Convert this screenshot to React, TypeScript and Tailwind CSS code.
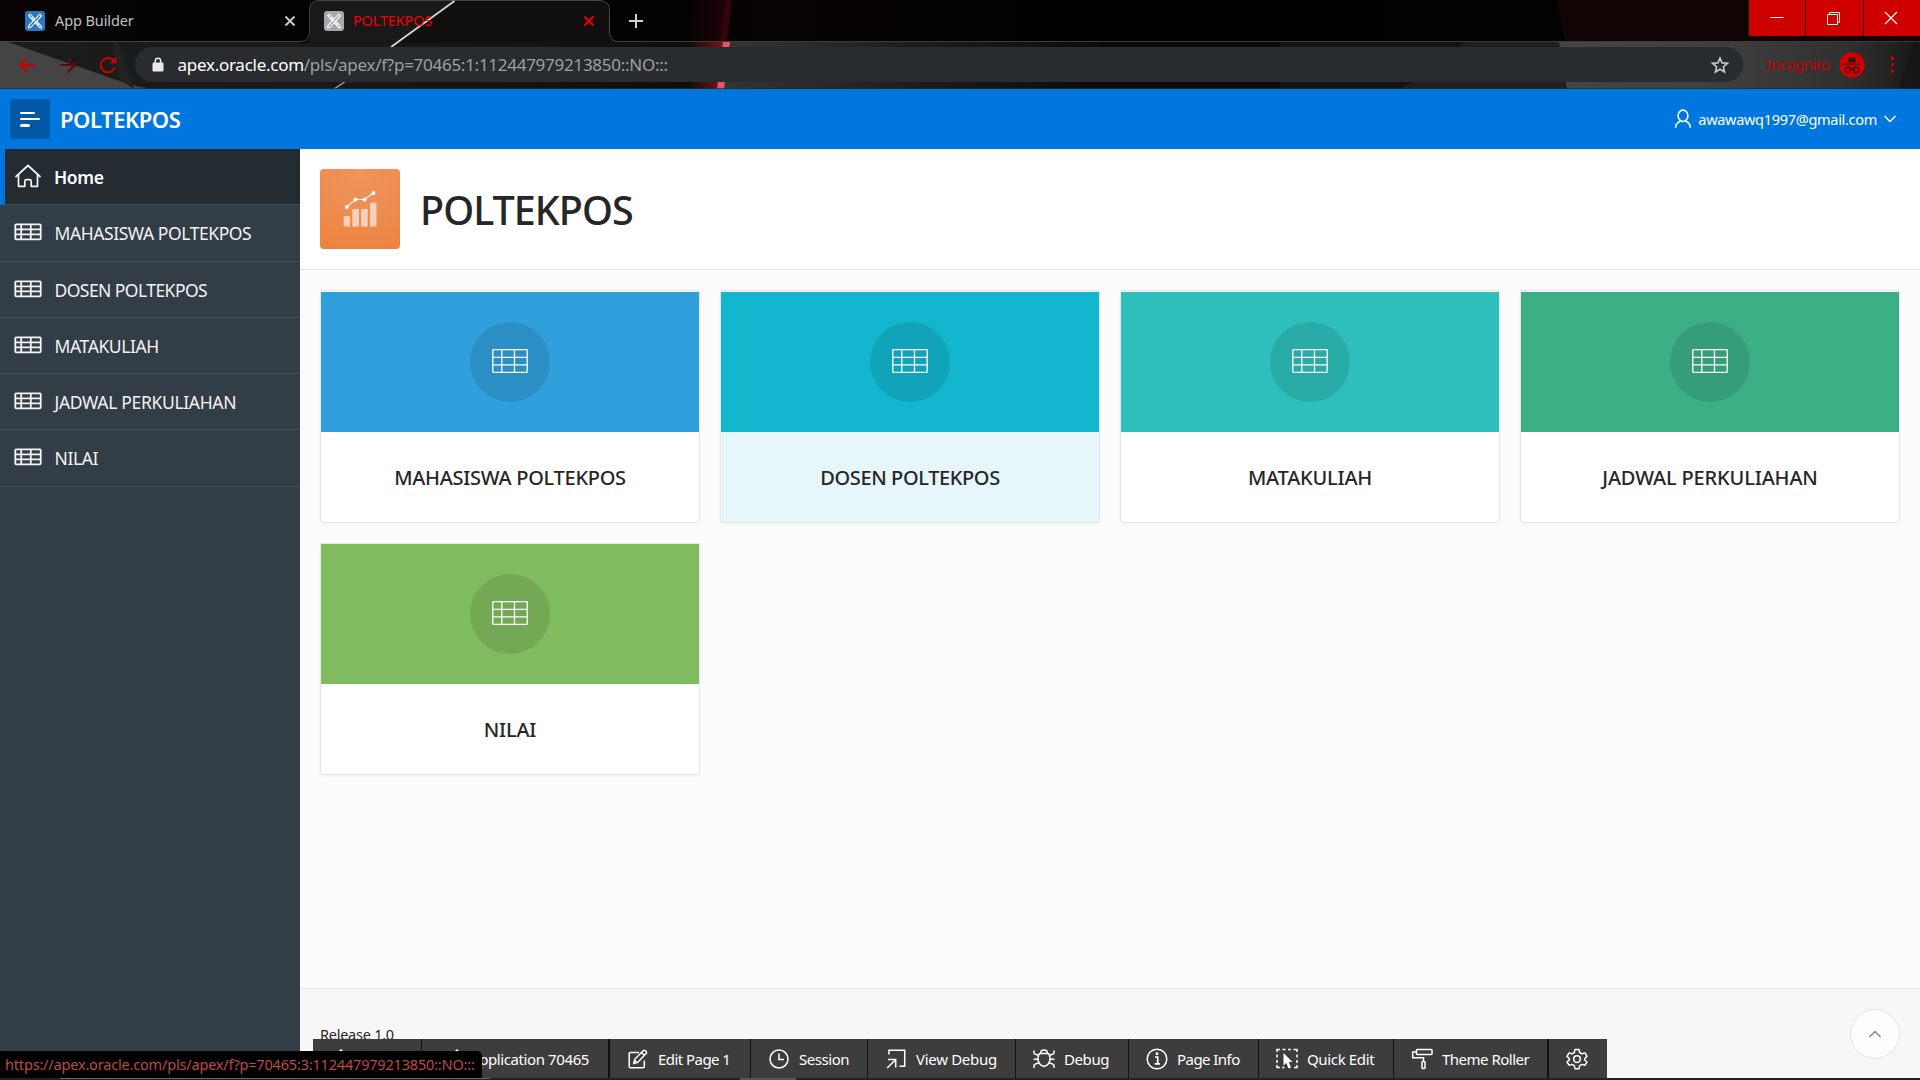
import React from 'react';

type IconProps = { className?: string };

/* ---------- Browser theme artwork ---------- */

function ThemeArt() {
  return (
    <svg className="absolute inset-0 h-[89px] w-[1920px]" viewBox="0 0 1920 89" fill="none">
      <defs>
        <linearGradient id="stripTop" x1="0" x2="1">
          <stop offset="0" stopColor="#0a0303" />
          <stop offset="0.1" stopColor="#020202" />
          <stop offset="0.35" stopColor="#030202" />
          <stop offset="0.4" stopColor="#070203" />
          <stop offset="0.55" stopColor="#020101" />
          <stop offset="0.8" stopColor="#030101" />
        </linearGradient>
        <linearGradient id="barMid" x1="0" x2="1">
          <stop offset="0" stopColor="#353535" />
          <stop offset="0.5" stopColor="#1d1d1d" />
          <stop offset="1" stopColor="#0b0b0b" />
        </linearGradient>
        <linearGradient id="barRight" x1="0" x2="1">
          <stop offset="0" stopColor="#454545" />
          <stop offset="0.4" stopColor="#404040" />
          <stop offset="0.8" stopColor="#303030" />
          <stop offset="1" stopColor="#181818" />
        </linearGradient>
        <linearGradient id="glow" x1="0" x2="1">
          <stop offset="0" stopColor="#7a1216" stopOpacity="0" />
          <stop offset="1" stopColor="#7a1216" />
        </linearGradient>
        <linearGradient id="barLeft" x1="0" x2="1">
          <stop offset="0" stopColor="#1c1c1c" />
          <stop offset="0.45" stopColor="#191919" />
          <stop offset="0.65" stopColor="#161514" />
          <stop offset="1" stopColor="#0f0d0c" />
        </linearGradient>
        <linearGradient id="topGlow" x1="0" x2="1">
          <stop offset="0" stopColor="#1c0306" stopOpacity="0" />
          <stop offset="1" stopColor="#1c0306" />
        </linearGradient>
      </defs>
      <rect width="1920" height="41" fill="url(#stripTop)" />
      <path d="M1557 0H1920V41H1565Z" fill="#110405" />
      <path d="M690 0H727L720 41H685Z" fill="url(#topGlow)" />
      <path d="M725 0H732L727 41H720Z" fill="#33030f" />
      <rect y="42" width="722" height="47" fill="url(#barLeft)" />
      <rect x="722" y="42" width="380" height="47" fill="url(#barMid)" />
      <rect x="1100" y="42" width="470" height="47" fill="#0a0a0a" />
      <path d="M1280 42H1465L1400 89H1280Z" fill="#131313" />
      <path d="M1465 42H1560L1567 89H1400Z" fill="#1f1f1f" />
      <path d="M1559 42H1920V89H1567Z" fill="url(#barRight)" />
      <path d="M1914 42H1920V89H1898Z" fill="#161616" opacity="0.7" />
      <path d="M0 42H8L128 84L150 89H0Z" fill="#444444" />
      <path d="M112 42H118L134 89L120 80Z" fill="#222222" />
      <rect x="690" y="42" width="32" height="47" fill="url(#glow)" />
      <path d="M723 42H730L724 89H717Z" fill="#f2506a" />
      <path d="M0 41.5H299" stroke="#454545" />
      <path d="M619 41.5H1920" stroke="#3c3c3c" />
      <path
        d="M299 41.5C306 41.5 309.5 38 309.5 31V10C309.5 4 313 0.5 319 0.5H599C605 0.5 609.5 4 609.5 10V31C609.5 38 612 41.5 619 41.5V43H299Z"
        fill="#11100f"
      />
      <path d="M310 10C310 4 313 1 319 1H455L392 47H310Z" fill="#191919" />
      <path
        d="M299 41.5C306 41.5 309.5 38 309.5 31V10C309.5 4 313 0.5 319 0.5H599C605 0.5 609.5 4 609.5 10V31C609.5 38 612 41.5 619 41.5"
        stroke="#454545"
      />
      <path d="M454.500 1L391 47" stroke="#d8d8d8" strokeWidth="1.700" />
      <path d="M346 81L334 89" stroke="#9a9a9a" strokeWidth="1.500" />
      <path d="M0 88.500H1920" stroke="#2a2a2a" opacity="0.7" />
    </svg>
  );
}

/* ---------- Icons ---------- */

function ApexLogo({ className }: IconProps) {
  return (
    <svg className={className} viewBox="0 0 20 20" fill="none" stroke="#fff" strokeWidth="1.1" strokeLinejoin="round">
      <path d="M3.600 4.600L5.200 3.200L16.400 15.400L16.600 17L15 16.800Z" />
      <path d="M14.800 3.200L16.600 4.800L6.200 16L3.400 16.900L4.200 14.200Z" fill="currentColor" />
      <path d="M6.500 6.500L14 14.500" opacity="0.700" />
    </svg>
  );
}

function Cross({ className }: IconProps) {
  return (
    <svg className={className} viewBox="0 0 12 12" fill="none" stroke="currentColor" strokeWidth="2">
      <path d="M1.500 1.500L10.500 10.500M10.500 1.500L1.500 10.500" />
    </svg>
  );
}

function ArrowIcon({ className }: IconProps) {
  return (
    <svg className={className} viewBox="0 0 18 18" fill="none" stroke="currentColor" strokeWidth="2">
      <path d="M17 9H2M9.500 1.500L2 9L9.500 16.500" />
    </svg>
  );
}

function ReloadIcon({ className }: IconProps) {
  return (
    <svg className={className} viewBox="0 0 18 18" fill="none">
      <path d="M14.800 4.800A7.200 7.200 0 1 0 16 11" stroke="currentColor" strokeWidth="2" />
      <path d="M17.300 0.500V7.500H10.300Z" fill="currentColor" />
    </svg>
  );
}

function LockIcon({ className }: IconProps) {
  return (
    <svg className={className} viewBox="0 0 12 15">
      <path d="M3.300 6V4A2.700 2.700 0 0 1 8.700 4V6" fill="none" stroke="#e8eaed" strokeWidth="1.500" />
      <rect x="0.500" y="5.500" width="11" height="9" rx="1.200" fill="#e8eaed" />
    </svg>
  );
}

function StarIcon({ className }: IconProps) {
  return (
    <svg className={className} viewBox="0 0 18 18" fill="none" stroke="#c4c7ca" strokeWidth="1.600">
      <path d="M9 2L11.100 6.900L16.400 7.300L12.400 10.800L13.600 16L9 13.200L4.400 16L5.600 10.800L1.600 7.300L6.900 6.900Z" />
    </svg>
  );
}

function IncognitoIcon({ className }: IconProps) {
  return (
    <svg className={className} viewBox="0 0 26 26">
      <circle cx="13" cy="13" r="12.700" fill="#d00000" />
      <g fill="#3a1010">
        <path d="M9 10.300L10 5.600Q11.500 5 13 5.900Q14.500 5 16 5.600L17 10.300Z" />
        <rect x="4.500" y="11.400" width="17" height="1.400" rx="0.600" />
      </g>
      <g fill="none" stroke="#3a1010" strokeWidth="1.300">
        <circle cx="9" cy="17.800" r="2.700" />
        <circle cx="17" cy="17.800" r="2.700" />
        <path d="M11.700 17.400Q13 16.600 14.300 17.400" />
      </g>
    </svg>
  );
}

function UserIcon({ className }: IconProps) {
  return (
    <svg className={className} viewBox="0 0 18 20" fill="none" stroke="currentColor" strokeWidth="1.600">
      <ellipse cx="9" cy="6.800" rx="4.900" ry="5.700" />
      <path d="M1.600 18.800C1.600 15.500 3.300 13.600 6.300 12.300M16.400 18.800C16.400 15.500 14.700 13.600 11.700 12.300" />
    </svg>
  );
}

function HomeIcon({ className }: IconProps) {
  return (
    <svg className={className} viewBox="0 0 28 24" fill="none" stroke="currentColor" strokeWidth="1.700" strokeLinejoin="round">
      <path d="M1.500 13L14 1.500L26.500 13" />
      <path d="M4.500 10.700V22.300H10.800V17.200Q10.800 15.600 12.400 15.600H15.600Q17.200 15.600 17.200 17.200V22.300H23.500V10.700" />
    </svg>
  );
}

function NavTableIcon({ className }: IconProps) {
  return (
    <svg className={className} viewBox="0 0 28 18" fill="none" stroke="currentColor" strokeWidth="1.800">
      <rect x="1.300" y="1.300" width="25.400" height="15" rx="0.800" />
      <path d="M1 6.300H27M1 11.300H27M7.200 1.500V16.500M16.800 1.500V16.500" />
    </svg>
  );
}

function CardTableIcon({ className }: IconProps) {
  return (
    <svg className={className} viewBox="0 0 36 24" fill="none" stroke="#fff" strokeWidth="1.300">
      <rect x="0.800" y="0.700" width="34.400" height="22.600" rx="0.500" />
      <path d="M1 8.300H35M1 15.800H35M9.800 1V23M22.500 1V23" />
    </svg>
  );
}

function ChartIcon({ className }: IconProps) {
  return (
    <svg className={className} viewBox="0 0 34 36">
      <g fill="#fff" fillOpacity="0.600">
        <rect x="0.700" y="25" width="6.300" height="10.500" />
        <rect x="9.300" y="18" width="6.700" height="17.500" />
        <rect x="18" y="18" width="6.700" height="17.500" />
        <rect x="27" y="11.700" width="6.500" height="23.800" />
      </g>
      <path d="M3.800 16L12.500 8.500H21.500L30.500 2" fill="none" stroke="#fff" strokeWidth="1.200" />
      <g fill="#fff">
        <circle cx="3.800" cy="16" r="1.900" />
        <circle cx="12.500" cy="8.500" r="1.900" />
        <circle cx="21.500" cy="8.500" r="1.900" />
        <circle cx="30.500" cy="2" r="1.900" />
      </g>
    </svg>
  );
}

function ToolIcon({ className, children }: IconProps & { children: React.ReactNode }) {
  return (
    <svg className={className} viewBox="0 0 22 22" fill="none" stroke="currentColor" strokeWidth="1.500">
      {children}
    </svg>
  );
}

const toolIcons = {
  home: <path d="M1 11L11 2L21 11M4 9V20H9V14H13V20H18V9" />,
  app: (
    <>
      <path d="M15 5H3V19H18V11" />
      <path d="M8 14L9 11L18 2L20 4L11 13Z" />
    </>
  ),
  edit: (
    <>
      <path d="M12 4.500H3.500Q2.200 4.500 2.200 5.800V18.500Q2.200 19.800 3.500 19.800H16Q17.300 19.800 17.300 18.500V12.500" />
      <path d="M6.800 15.500L7.700 11.300L16.200 2.700Q17.200 1.700 18.300 2.700L19.100 3.500Q20.100 4.600 19.100 5.600L10.700 14.400ZM14.500 4.500L17.300 7.300M8 12.500L9.700 14.300" />
    </>
  ),
  session: (
    <>
      <circle cx="11" cy="11" r="9" />
      <path d="M11 5.500V11.500H16" />
    </>
  ),
  viewDebug: (
    <>
      <path d="M4 6.500V2.200H19.700V18.200H14.500" />
      <path d="M2.200 20L10.500 11.700M3 11.500H10.700V19.500" />
    </>
  ),
  debug: (
    <>
      <path d="M7 5.500H15Q17 6.500 17 11Q17 16.500 11 18.500Q5 16.500 5 11Q5 6.500 7 5.500ZM7.500 5.500Q7.500 2 11 2Q14.500 2 14.500 5.500" />
      <path d="M1 2.500V5Q1.500 6.500 5.800 7M21 2.500V5Q20.500 6.500 16.200 7M0.500 11.300H5M17 11.300H21.500M1 20V17.500Q1.500 15.800 5.800 15M21 20V17.500Q20.500 15.800 16.200 15" />
    </>
  ),
  info: (
    <>
      <circle cx="11" cy="11" r="9.800" />
      <path d="M9 9H11.700V15.500M8.700 15.800H14" strokeWidth="1.700" />
      <circle cx="11" cy="5.800" r="0.700" fill="currentColor" />
    </>
  ),
  quick: (
    <>
      <path d="M1 4V1.500H4M6.500 1.500H9.500M12 1.500H15M17.500 1.500H21V4M1 6.500V9.500M1 12V15M1 17V19.500H4M21 6.500V9.500M21 12V15M21 17V19.500H18M6 19.500H8.500" />
      <path d="M7.500 5V17.500L10.300 15L12.500 20.500L15 19.500L12.700 14H16.500Z" fill="currentColor" stroke="none" />
    </>
  ),
  roller: (
    <>
      <rect x="5.500" y="1.500" width="15.500" height="5" rx="0.800" />
      <path d="M5.500 4H1.700V9.800H12.500V13.500" />
      <rect x="11" y="13.500" width="3" height="7" rx="0.800" />
    </>
  ),
  gear: (
    <>
      <path d="M9 1.500H13L13.700 4.500L16 5.800L19 4.900L21 8.400L18.700 10.500V12L21 14L19 17.200L16 16.400L13.700 17.700L13 20.700H9L8.300 17.700L6 16.400L3 17.200L1 14L3.300 12V10.500L1 8.400L3 4.900L6 5.800L8.300 4.500Z" strokeLinejoin="round" />
      <circle cx="11" cy="11.100" r="3.300" />
    </>
  ),
};

function Chevron({ className }: IconProps) {
  return (
    <svg className={className} viewBox="0 0 14 8" fill="none" stroke="currentColor" strokeWidth="1.500">
      <path d="M1.500 1L7 6.500L12.500 1" />
    </svg>
  );
}

/* ---------- Browser chrome ---------- */

function BrowserChrome() {
  return (
    <div className="relative h-[89px] overflow-hidden bg-black">
      <ThemeArt />
      <div className="relative flex h-[41px] items-start justify-between">
        <div className="flex h-[41px] items-center">
          <div className="flex w-[309px] items-center pr-[13px] pl-[25px]">
            <span className="h-5 w-5 shrink-0 rounded-[3px] bg-[#2a78c4] text-[#2a78c4]">
              <ApexLogo className="h-5 w-5" />
            </span>
            <span className="ml-[10px] flex-1 text-[14.5px] tracking-[-0.1px] text-[#bfc3c7]">App Builder</span>
            <Cross className="h-3 w-3 text-[#c4c8cc]" />
          </div>
          <div className="flex w-[300px] items-center pr-[14px] pl-[15px]">
            <span className="h-5 w-5 shrink-0 rounded-[3px] bg-[#a5a9ad] text-[#a5a9ad]">
              <ApexLogo className="h-5 w-5" />
            </span>
            <span className="ml-[9px] flex-1 text-[14.5px] tracking-[-0.15px] text-[#f00000]">POLTEKPOS</span>
            <Cross className="h-3 w-3 text-[#f00000]" />
          </div>
          <svg className="ml-5 h-[14px] w-[14px]" viewBox="0 0 14 14" stroke="#d0d3d6" strokeWidth="2">
            <path d="M7 0V14M0 7H14" />
          </svg>
        </div>
        <div className="flex gap-px text-white">
          <div className="flex h-9 w-14 items-center justify-center bg-[#cf0000]">
            <svg className="h-[14px] w-[14px]" viewBox="0 0 14 14" stroke="currentColor">
              <path d="M0.500 6.500H13.500" />
            </svg>
          </div>
          <div className="flex h-9 w-[57px] items-center justify-center bg-[#cf0000] pr-[2px]">
            <svg className="h-[14px] w-[14px]" viewBox="0 0 14 14" fill="none" stroke="currentColor">
              <path d="M0.500 3.500H10.500V13.500H0.500ZM2.500 3.500V1.500H12.500V11.500H10.500" />
            </svg>
          </div>
          <div className="flex h-9 w-14 items-center justify-center bg-[#cf0000] pr-[2px]">
            <svg className="h-[14px] w-[14px]" viewBox="0 0 14 14" stroke="currentColor" strokeWidth="1.200">
              <path d="M1 1L13 13M13 1L1 13" />
            </svg>
          </div>
        </div>
      </div>
      <div className="relative flex h-[47px] items-center pr-[26px] pl-[18px]">
        <ArrowIcon className="h-[18px] w-[18px] text-[#cc0000]" />
        <ArrowIcon className="ml-[23px] h-[18px] w-[18px] rotate-180 text-[#5c0b0b]" />
        <ReloadIcon className="ml-[22px] h-[18px] w-[18px] text-[#cc0000]" />
        <div className="ml-[18px] flex h-[35px] w-[1608px] items-center rounded-full bg-[#282c2f] pr-[14px] pl-[17px]">
          <LockIcon className="h-[15px] w-3" />
          <span className="ml-[13.500px] flex-1 text-[17px] tracking-[-0.27px] text-[#9aa0a6]">
            <span className="text-white">apex.oracle.com</span>/pls/apex/f?p=70465:1:112447979213850::NO:::
          </span>
          <StarIcon className="h-[18px] w-[18px]" />
        </div>
        <span className="ml-[23px] text-[15px] tracking-[-0.45px] text-[#c40000]">Incognito</span>
        <IncognitoIcon className="ml-[10px] h-[26px] w-[26px]" />
        <div className="ml-auto flex flex-col gap-[3px]">
          <i className="h-[3.500px] w-[3.500px] rounded-full bg-[#cc0000]" />
          <i className="h-[3.500px] w-[3.500px] rounded-full bg-[#cc0000]" />
          <i className="h-[3.500px] w-[3.500px] rounded-full bg-[#cc0000]" />
        </div>
      </div>
    </div>
  );
}

/* ---------- Application ---------- */

function AppHeader() {
  return (
    <header className="flex h-[60px] items-center bg-[#0076df] pr-[23px] pl-[10px] text-white">
      <button className="flex h-10 w-10 flex-col items-start justify-center gap-1 rounded-[3px] bg-[#0158a7] pl-[10px]">
        <i className="h-[2px] w-[15px] rounded-sm bg-white" />
        <i className="h-[2px] w-5 rounded-sm bg-white" />
        <i className="h-[3px] w-[10px] rounded-sm bg-white" />
      </button>
      <span className="ml-[10px] text-[22px] leading-8 font-semibold tracking-[-0.45px]">POLTEKPOS</span>
      <div className="ml-auto flex items-center">
        <UserIcon className="h-5 w-[18px]" />
        <span className="ml-[6px] pt-px text-[14.500px] tracking-[-0.3px]">awawawq1997@gmail.com</span>
        <Chevron className="ml-[6px] h-2 w-[14px]" />
      </div>
    </header>
  );
}

const navItems = [
  { label: 'MAHASISWA POLTEKPOS', row: 'h-[57px]', text: 'pt-px tracking-[-0.430px]' },
  { label: 'DOSEN POLTEKPOS', row: 'h-[56px]', text: 'pt-0.5 tracking-[-0.550px]' },
  { label: 'MATAKULIAH', row: 'h-[56px]', text: 'pt-0.5 tracking-[-0.400px]' },
  { label: 'JADWAL PERKULIAHAN', row: 'h-[56px]', text: 'pt-0.5 tracking-[-0.330px]' },
  { label: 'NILAI', row: 'h-[57px]', text: 'pt-px tracking-[-0.400px]' },
];

function Sidebar() {
  return (
    <nav className="w-[300px] shrink-0 bg-[#333d46] text-[#f2f3f4]">
      <div className="flex h-14 items-center border-b border-l-[5px] border-b-[#454f58] border-l-[#0076df] bg-[#242b31] pl-[9px]">
        <HomeIcon className="mb-px h-6 w-7" />
        <span className="ml-[12px] pt-0.5 text-[17.500px] font-semibold tracking-[-0.4px] text-white">Home</span>
      </div>
      {navItems.map(({ label, row, text }) => (
        <div key={label} className={`flex items-center border-b border-[#454f58] pl-[13.500px] ${row}`}>
          <NavTableIcon className="mb-[2px] h-[18px] w-7" />
          <span className={`ml-[13px] text-[17.500px] ${text}`}>{label}</span>
        </div>
      ))}
    </nav>
  );
}

type CardData = { label: string; banner: string; body: string; frame: string };

const cards: CardData[] = [
  { label: 'MAHASISWA POLTEKPOS', banner: 'bg-[#309fdb]', body: 'bg-white tracking-[-0.280px]', frame: 'h-[233px] pt-px' },
  { label: 'DOSEN POLTEKPOS', banner: 'bg-[#13b6cf]', body: 'bg-[#e7f6fa] tracking-[-0.380px]', frame: 'h-[233px] pt-px' },
  { label: 'MATAKULIAH', banner: 'bg-[#2ebfbc]', body: 'bg-white tracking-[-0.200px]', frame: 'h-[233px] pt-px' },
  { label: 'JADWAL PERKULIAHAN', banner: 'bg-[#3caf85]', body: 'bg-white tracking-[-0.150px]', frame: 'h-[233px] pt-px' },
  { label: 'NILAI', banner: 'bg-[#81bb5f]', body: 'bg-white tracking-[-0.200px]', frame: 'h-[232px]' },
];

function Card({ label, banner, body, frame }: CardData) {
  return (
    <div className={`flex flex-col rounded-[2px] border border-[#e6e6e6] bg-white shadow-[0_2px_4px_-2px_rgba(0,0,0,0.08)] ${frame}`}>
      <div className={`flex h-[140px] shrink-0 items-center justify-center ${banner}`}>
        <div className="flex h-20 w-20 items-center justify-center rounded-full bg-black/10 pb-[2px]">
          <CardTableIcon className="h-6 w-9" />
        </div>
      </div>
      <div className={`flex flex-1 items-center justify-center pt-0.5 text-[20px] font-medium text-[#262626] ${body}`}>
        {label}
      </div>
    </div>
  );
}

function MainContent() {
  return (
    <main className="flex flex-1 flex-col bg-[#fcfcfc]">
      <div className="flex h-[121px] items-center border-b border-[#e2e2e2] bg-white px-5">
        <div className="flex h-20 w-20 items-center justify-center rounded bg-[radial-gradient(circle_at_50%_0%,#f0955c_0%,#ee8d52_50%,#ed813c_100%)]">
          <ChartIcon className="h-9 w-[34px]" />
        </div>
        <h1 className="ml-5 pt-px text-[39.500px] leading-[56px] font-medium tracking-[-0.950px] text-[#262626]">POLTEKPOS</h1>
      </div>
      <div className="grid grid-cols-4 gap-5 px-5 pt-5">
        {cards.map((card) => (
          <Card key={card.label} {...card} />
        ))}
      </div>
      <footer className="mt-auto h-[92px] border-t border-[#e6e6e6] bg-[#f7f7f7] pt-[34px] pl-5 text-[14.500px] leading-[22px] tracking-[-0.25px] text-[#262626]">
        Release 1.0
      </footer>
    </main>
  );
}

/* ---------- Overlays ---------- */

const tools: { label: string; icon: keyof typeof toolIcons; box: string }[] = [
  { label: '', icon: 'home', box: 'w-[109px] border-r' },
  { label: 'Application 70465', icon: 'app', box: 'w-[188px] border-r-2 tracking-[-0.400px]' },
  { label: 'Edit Page 1', icon: 'edit', box: 'w-[141px] border-r tracking-[-0.550px]' },
  { label: 'Session', icon: 'session', box: 'w-[117px] border-r tracking-[-0.450px]' },
  { label: 'View Debug', icon: 'viewDebug', box: 'w-[148px] border-r tracking-[-0.300px]' },
  { label: 'Debug', icon: 'debug', box: 'w-[113px] border-r tracking-[-0.400px]' },
  { label: 'Page Info', icon: 'info', box: 'w-[130px] border-r tracking-[-0.550px]' },
  { label: 'Quick Edit', icon: 'quick', box: 'w-[135px] border-r tracking-[-0.350px]' },
  { label: 'Theme Roller', icon: 'roller', box: 'w-[155px] border-r-2 tracking-[-0.500px]' },
  { label: '', icon: 'gear', box: 'w-[58px]' },
];

function DeveloperToolbar() {
  return (
    <div className="absolute bottom-[2px] left-[313px] flex h-[39px] bg-[#3d3d3d] text-white">
      {tools.map(({ label, icon, box }) => (
        <div key={icon} className={`flex shrink-0 items-center border-[#111] pl-[17px] ${box}`}>
          <ToolIcon className="h-[22px] w-[22px] shrink-0">{toolIcons[icon]}</ToolIcon>
          {label && <span className="ml-[9px] pt-px text-[15px] whitespace-nowrap">{label}</span>}
        </div>
      ))}
    </div>
  );
}

export default function App() {
  return (
    <div className="relative flex h-[1080px] w-[1920px] flex-col overflow-hidden font-['Noto_Sans',sans-serif]">
      <BrowserChrome />
      <AppHeader />
      <div className="flex flex-1">
        <Sidebar />
        <MainContent />
      </div>
      <div className="absolute right-5 bottom-[21px] flex h-[50px] w-[50px] items-center justify-center rounded-full border border-[#e4e4e4] bg-[#fdfdfd] text-[#8a8a8a]">
        <Chevron className="h-2 w-[14px] rotate-180" />
      </div>
      <DeveloperToolbar />
      <div className="absolute bottom-[2px] left-0 flex h-[27px] w-[482px] items-center rounded-tr-[5px] bg-black pl-[5px] text-[14.500px] tracking-[-0.180px] whitespace-nowrap text-[#bd4a4a]">
        https://apex.oracle.com/pls/apex/f?p=70465:3:112447979213850::NO:::
      </div>
      <div className="absolute bottom-0 left-0 flex h-[2px] w-full bg-[#232122]">
        <i className="ml-[60px] h-px w-[430px] bg-[#666]" />
        <i className="ml-[250px] h-[2px] w-14 bg-[#555]" />
      </div>
    </div>
  );
}
